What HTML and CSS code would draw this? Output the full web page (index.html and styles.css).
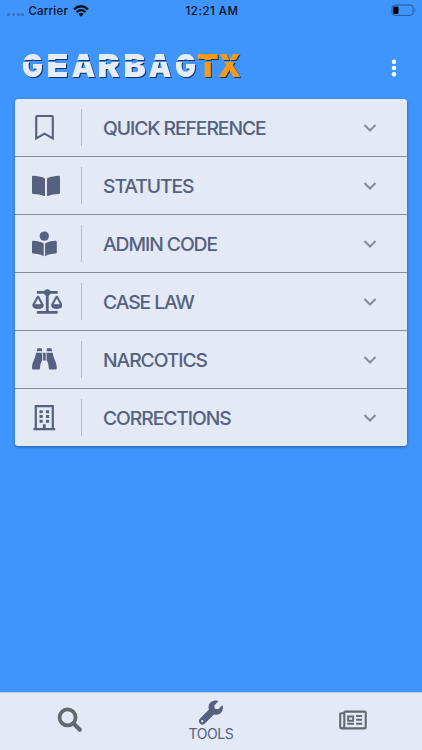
FILE: index.html
```html
<!DOCTYPE html>
<html lang="en">
<head>
<meta charset="utf-8">
<meta name="viewport" content="width=device-width, initial-scale=1">
<title>GearbagTX</title>
<link rel="stylesheet" href="styles.css">
</head>
<body>
<div class="app">
  <div class="status">
    <div class="carrier">
      <span class="dots"><i></i><i></i><i></i><i></i></span>
      <span class="carrier-name">Carrier</span>
      <svg class="wifi" width="16" height="12" viewBox="0 0 16 12"><g fill="none" stroke="#08111c" stroke-width="2.2"><path d="M1 4.4Q8-1.9 15 4.4"/><path d="M3.5 7.1Q8 3.1 12.5 7.1"/></g><path d="M5.3 8.9Q8 6.7 10.7 8.9L8 11.7Z" fill="#08111c"/></svg>
    </div>
    <time class="clock">12:21 AM</time>
    <svg class="battery" width="26" height="13" viewBox="0 0 26 13"><rect x="1" y="1" width="21" height="10.4" rx="2.8" fill="none" stroke="#265a9b"/><rect x="2.3" y="2.4" width="5.2" height="7.6" rx="1.3" fill="#000"/><path d="M23.5 4.2q2 2 0 4Z" fill="#265a9b"/></svg>
  </div>

  <header class="header">
    <svg class="logo" width="230" height="48" viewBox="0 0 230 48" role="img" aria-label="GEARBAGTX">
      <defs>
        <mask id="stencil" maskUnits="userSpaceOnUse" x="0" y="0" width="230" height="48">
          <path d="M0 0h230v48H0Z" fill="#fff"/>
          <path d="M0 19h230" stroke="#000" stroke-width="2"/>
        </mask>
      </defs>
      <g class="logo-text">
        <text mask="url(#stencil)" y="35"><tspan x="2" textLength="21" lengthAdjust="spacingAndGlyphs">G</tspan><tspan x="26.5" textLength="22" lengthAdjust="spacingAndGlyphs">E</tspan><tspan x="51.5" textLength="24" lengthAdjust="spacingAndGlyphs">A</tspan><tspan x="77.5" textLength="22.5" lengthAdjust="spacingAndGlyphs">R</tspan><tspan x="103.5" textLength="22.5" lengthAdjust="spacingAndGlyphs">B</tspan><tspan x="128.5" textLength="23" lengthAdjust="spacingAndGlyphs">A</tspan><tspan x="155" textLength="21" lengthAdjust="spacingAndGlyphs">G</tspan><tspan class="logo-tx" x="177" textLength="21.5" lengthAdjust="spacingAndGlyphs">T</tspan><tspan class="logo-tx" x="198" textLength="23" lengthAdjust="spacingAndGlyphs">X</tspan></text>
      </g>
    </svg>
    <svg class="more" width="6" height="18" viewBox="0 0 6 18" fill="#fff"><circle cx="3" cy="2.8" r="2.25"/><circle cx="3" cy="9" r="2.25"/><circle cx="3" cy="15.2" r="2.25"/></svg>
  </header>

  <main class="card">
    <div class="row">
      <div class="icon"><svg width="32" height="32" viewBox="0 0 32 32"><path d="M6.2 5q0-1 1-1h14.6q1 0 1 1v21.4l-8.3-4.8-8.3 4.8Z" fill="none" stroke="currentColor" stroke-width="2.1"/></svg></div>
      <div class="label">QUICK REFERENCE</div>
      <svg class="chevron" width="14" height="10" viewBox="0 0 14 10"><path d="M1.5 2 7 7.5 12.5 2"/></svg>
    </div>
    <div class="row">
      <div class="icon"><svg width="32" height="32" viewBox="0 0 32 32" fill="currentColor"><path d="M2 7q0-1.2 1.2-1.2c4 .2 8 .8 11 2.3q.8.4.8 1.3v16.1q0 .8-.9.5c-3-1.3-6.6-1.8-10.9-2Q2 23.9 2 22.8ZM30 7q0-1.2-1.2-1.2c-4 .2-8 .8-11 2.3q-.8.4-.8 1.3v16.1q0 .8.9.5c3-1.3 6.6-1.8 10.9-2q1.2-.1 1.2-1.2Z"/></svg></div>
      <div class="label">STATUTES</div>
      <svg class="chevron" width="14" height="10" viewBox="0 0 14 10"><path d="M1.5 2 7 7.5 12.5 2"/></svg>
    </div>
    <div class="row">
      <div class="icon"><svg width="32" height="32" viewBox="0 0 32 32" fill="currentColor"><circle cx="14.3" cy="8.1" r="4.7"/><path d="M2 14q0-1.2 1.2-1.2c4 0 7.6.8 10.5 2.6v12.8c-3-1.8-6.5-2.4-10.5-2.6Q2 25.5 2 24.4ZM26.8 14q0-1.2-1.2-1.2c-4 0-7.6.8-10.5 2.6v12.8c3-1.8 6.5-2.4 10.5-2.6q1.2-.1 1.2-1.2Z"/></svg></div>
      <div class="label">ADMIN CODE</div>
      <svg class="chevron" width="14" height="10" viewBox="0 0 14 10"><path d="M1.5 2 7 7.5 12.5 2"/></svg>
    </div>
    <div class="row">
      <div class="icon"><svg width="32" height="32" viewBox="0 0 32 32" fill="currentColor"><circle cx="17.3" cy="6.4" r="3.2"/><rect x="6.8" y="5" width="21" height="2.7" rx=".8"/><rect x="15.9" y="6" width="2.8" height="21"/><rect x="6.8" y="25" width="21" height="2.8" rx=".8"/><path fill-rule="evenodd" d="M2.4 18.6 6.8 10.6q1.2-1.6 2.4 0l4.4 8q.5 4.3-5.6 4.3t-5.6-4.3Zm2.5-.3h6.2L8 12.6ZM21.2 18.6l4.4-8q1.2-1.6 2.4 0l4.4 8q.3 4.3-5.6 4.3t-5.6-4.3Zm2.5-.3h6.2l-3.1-5.7Z"/></svg></div>
      <div class="label">CASE LAW</div>
      <svg class="chevron" width="14" height="10" viewBox="0 0 14 10"><path d="M1.5 2 7 7.5 12.5 2"/></svg>
    </div>
    <div class="row">
      <div class="icon"><svg width="32" height="32" viewBox="0 0 32 32" fill="currentColor"><path d="M7.2 5q0-.8.8-.8h3.2q.8 0 .8.8v2.2H6.7ZM21.6 5q0-.8-.8-.8h-3.2q-.8 0-.8.8v2.2h5.3ZM6 8.8h6.2v7.8q-1.8 1.8-2.2 7.6 0 1.3-1.2 1.3H3.2Q2 25.5 2 24.2C2 17 5.2 16.2 6 8.8ZM22.8 8.8h-6.2v7.8q1.8 1.8 2.2 7.6 0 1.3 1.2 1.3h5.6q1.2 0 1.2-1.3c0-7.2-3.2-8-4-15.4ZM13.1 8.8h2.6v7.8h-2.6Z"/></svg></div>
      <div class="label">NARCOTICS</div>
      <svg class="chevron" width="14" height="10" viewBox="0 0 14 10"><path d="M1.5 2 7 7.5 12.5 2"/></svg>
    </div>
    <div class="row">
      <div class="icon"><svg width="32" height="32" viewBox="0 0 32 32"><path d="M3.4 27.1h21.8M5.8 27V4.2h17V27" fill="none" stroke="currentColor" stroke-width="2.2"/><path d="M9.5 8.2h3.2v3H9.5ZM15.9 8.2h3.2v3h-3.2ZM9.5 13h3.2v3H9.5ZM15.9 13h3.2v3h-3.2ZM9.5 17.8h3.2v3H9.5ZM15.9 17.8h3.2v3h-3.2ZM12.9 22.3h2.8v4.5h-2.8Z" fill="currentColor"/></svg></div>
      <div class="label">CORRECTIONS</div>
      <svg class="chevron" width="14" height="10" viewBox="0 0 14 10"><path d="M1.5 2 7 7.5 12.5 2"/></svg>
    </div>
  </main>

  <nav class="tabs">
    <div class="tab"><svg width="26" height="26" viewBox="0 0 26 26" fill="none" stroke="currentColor"><circle cx="10.6" cy="10.4" r="8" stroke-width="3.8"/><path d="m16.8 16.7 6 6" stroke-width="4.2" stroke-linecap="round"/></svg></div>
    <div class="tab active"><svg width="26" height="26" viewBox="0 0 512 512" fill="currentColor"><path fill-rule="evenodd" d="M488 116c-2-9-14-12-20-5l-72 72-65-11-11-65 72-72c7-7 4-18-6-21-83-20-168 27-178 112-2 21 2 43 9 63L36 370a68 68 0 0 0 96 96l181-181c93 29 200-50 175-169ZM84 440a22 22 0 1 1 0-44 22 22 0 0 1 0 44Z"/></svg><span>TOOLS</span></div>
    <div class="tab"><svg class="news" width="28" height="20" viewBox="0 0 28 20" fill="none" stroke="currentColor"><path d="M5.3 1.6h20.4q1 0 1 1v14.8q0 1-1 1H3q-1.8 0-1.8-1.8V4.2q0-.9.9-.9h2.2M5.3 1.6v14q0 2.5-2.2 2.7" stroke-width="2.1"/><path d="M9.1 6.5h5v4.2h-5Z" stroke-width="1.9"/><path d="M17.1 6h6M17.1 9.8h6M8.2 13.7h6.8M17.1 13.7h6" stroke-width="1.9"/></svg></div>
  </nav>
</div>
</body>
</html>
```

FILE: styles.css
```css
* { box-sizing: border-box; }
body { margin: 0; }
svg { display: block; flex: none; }

.app {
  display: flex;
  flex-direction: column;
  width: 422px;
  height: 750px;
  background: #4095fc;
  font-family: Inter, "Liberation Sans", sans-serif;
  overflow: hidden;
}

.status {
  display: grid;
  grid-template-columns: 1fr auto 1fr;
  align-items: center;
  height: 21px;
  padding: 0 5px 0 7px;
  color: #08111c;
  font-size: 11.5px;
  font-weight: 500;
}
.carrier { display: flex; align-items: center; }
.dots { display: flex; gap: 1.8px; margin: 7px 4px 0 0; }
.dots i { width: 3px; height: 3px; border-radius: 50%; background: #2f70bf; }
.carrier-name { width: 41px; margin-right: 4px; letter-spacing: .2px; }
.clock { letter-spacing: .5px; }
.battery { justify-self: end; }

.header {
  display: flex;
  align-items: center;
  justify-content: space-between;
  height: 77px;
  padding: 13px 25px 0 20px;
}
.more { margin-top: 3px; }
.logo-text {
  fill: #e6ecf8;
  font-size: 31.5px;
  font-weight: 900;
  filter: drop-shadow(1.5px 1.5px .5px #17365d);
}
.logo-tx { fill: #f79b17; }

.card {
  width: 392px;
  margin: 1px 0 0 15px;
  border-radius: 3px;
  background: #e3e9f5;
  box-shadow: 0 1px 3px rgba(20, 50, 90, .55);
}
.row {
  display: flex;
  align-items: center;
  height: 58px;
  padding-right: 30px;
  border-bottom: 1px solid #858b98;
  color: #55617f;
}
.row:last-child { height: 57px; border-bottom: 0; }
.icon {
  display: flex;
  align-items: center;
  width: 67px;
  height: 37px;
  padding-left: 14.7px;
  border-right: 1px solid #b5bdcb;
}
.label {
  flex: 1;
  padding-left: 21px;
  font-size: 19.3px;
  font-weight: 550;
  letter-spacing: -1.06px;
}
.chevron { fill: none; stroke: #858c9c; stroke-width: 2; }

.tabs {
  display: grid;
  grid-template-columns: repeat(3, 1fr);
  height: 58px;
  margin-top: auto;
  border-top: 1px solid #b9cbe4;
  background: #e3e9f5;
}
.tab {
  display: flex;
  flex-direction: column;
  align-items: center;
  justify-content: center;
  padding-bottom: 3px;
  color: #65696f;
}
.tab.active { justify-content: flex-start; padding-top: 7px; color: #55617f; }
.tab span { margin-top: -1px; font-size: 14px; line-height: 17px; letter-spacing: -.4px; }
.news { margin-left: 2px; }
```
